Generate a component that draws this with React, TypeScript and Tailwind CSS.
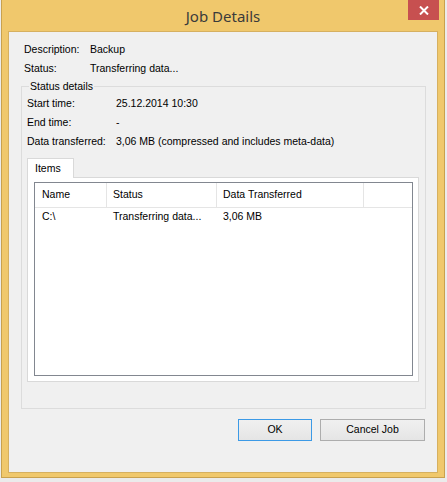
const font = { fontFamily: '"Liberation Sans", Arial, sans-serif' }

const JobDetails = () => {
  return (
    <div className="w-[447px] h-[482px] bg-[#ebebeb] overflow-hidden" style={font}>
      {/* Window frame */}
      <div className="ml-[1px] w-[444px] h-[478px] bg-[#f0c86c] border border-t-0 border-[#c9a14e] flex flex-col">
        {/* Title bar */}
        <div className="relative h-[31px] shrink-0 flex items-center justify-center">
          <span
            className="text-[15px] text-[#3b3b3b] mt-[1px]"
            style={{ fontFamily: '"Noto Sans", "Open Sans", sans-serif' }}
          >
            Job Details
          </span>
          <button className="absolute right-[5px] top-0 w-[31px] h-[20px] bg-[#c75050] flex items-center justify-center">
            <svg width="10" height="9" viewBox="0 0 10 9">
              <path d="M1 0.5 L9 8.5 M9 0.5 L1 8.5" stroke="#fff" strokeWidth="2" />
            </svg>
          </button>
        </div>

        {/* Client area */}
        <div className="ml-[6px] w-[430px] h-[442px] bg-[#f0f0f0] border border-[#d6b060] text-[10.5px] text-black">
          <div className="pt-[8px] pl-[15px]">
            <div className="flex h-[19px] items-center">
              <span className="w-[66px]">Description:</span>
              <span>Backup</span>
            </div>
            <div className="flex h-[19px] items-center">
              <span className="w-[66px]">Status:</span>
              <span>Transferring data...</span>
            </div>
          </div>

          {/* Status details group */}
          <div className="relative mt-[8px] ml-[12px] w-[405px] h-[323px] border border-[#dcdcdc]">
            <span className="absolute -top-[8px] left-[7px] px-[1px] bg-[#f0f0f0] leading-[14px]">
              Status details
            </span>
            <div className="pt-[7px] pl-[5px]">
              <div className="flex h-[19px] items-center">
                <span className="w-[89px]">Start time:</span>
                <span>25.12.2014 10:30</span>
              </div>
              <div className="flex h-[19px] items-center">
                <span className="w-[89px]">End time:</span>
                <span>-</span>
              </div>
              <div className="flex h-[19px] items-center">
                <span className="w-[89px]">Data transferred:</span>
                <span>3,06 MB (compressed and includes meta-data)</span>
              </div>
            </div>

            {/* Tabs */}
            <div className="mt-[7px] ml-[5px] w-[392px]">
              <div className="flex">
                <div className="relative z-10 w-[47px] h-[20px] bg-white border border-b-0 border-[#d9d9d9] pl-[7px] leading-[19px]">
                  Items
                </div>
              </div>
              <div className="-mt-[1px] h-[205px] bg-white border border-[#d9d9d9] pt-[4px] pl-[6px]">
                {/* List view */}
                <div className="w-[379px] h-[194px] border border-[#828790] bg-white">
                  <div className="flex h-[25px] border-b border-[#e5e5e5]">
                    <div className="w-[72px] pl-[7px] flex items-center border-r border-[#e5e5e5]">Name</div>
                    <div className="w-[110px] pl-[6px] flex items-center border-r border-[#e5e5e5]">Status</div>
                    <div className="w-[147px] pl-[6px] flex items-center border-r border-[#e5e5e5]">Data Transferred</div>
                  </div>
                  <div className="flex h-[18px] items-center">
                    <div className="w-[72px] pl-[7px]">C:\</div>
                    <div className="w-[110px] pl-[6px] whitespace-nowrap">Transferring data...</div>
                    <div className="w-[147px] pl-[6px]">3,06 MB</div>
                  </div>
                </div>
              </div>
            </div>
          </div>

          {/* Buttons */}
          <div className="flex justify-end gap-[8px] mt-[10px] pr-[12px]">
            <button className="w-[74px] h-[22px] border border-[#3c9ae6] bg-gradient-to-b from-[#f0f0f0] to-[#e5e5e5]">
              OK
            </button>
            <button className="w-[105px] h-[22px] border border-[#adadad] bg-gradient-to-b from-[#f0f0f0] to-[#e5e5e5]">
              Cancel Job
            </button>
          </div>
        </div>
      </div>
    </div>
  )
}

export default JobDetails
